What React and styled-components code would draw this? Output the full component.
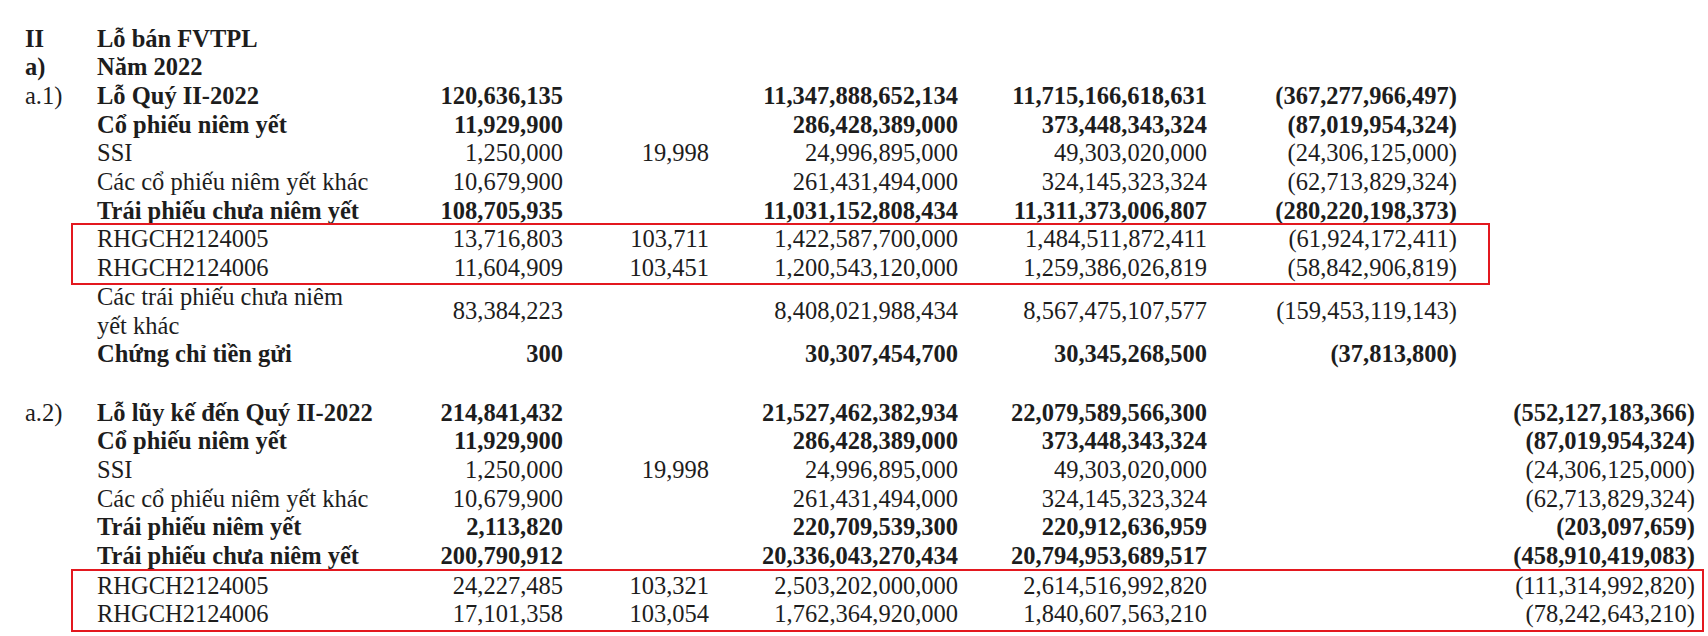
import React from 'react';
import styled, { createGlobalStyle } from 'styled-components';

const GlobalStyle = createGlobalStyle`
  html, body { margin: 0; padding: 0; background: #ffffff; }
  body {
    font-family: "Liberation Serif", "Times New Roman", serif;
    color: #1d1d1d;
  }
`;

const ROW = 28.7;
const COLS = '72px 300px 166px 146px 249px 249px 250px 238px';

const Sheet = styled.div`
  width: 1708px;
  height: 636px;
  box-sizing: border-box;
  padding: 24.65px 0 0 25px;
  overflow: hidden;
  font-size: 24.5px;
  display: flex;
  flex-direction: column;
`;

const Row = styled.div`
  display: grid;
  grid-template-columns: ${COLS};
  align-items: center;
  height: ${(p) => (p.$lines || 1) * ROW}px;
  line-height: ${ROW}px;
  font-weight: ${(p) => (p.$bold ? 700 : 400)};
`;

const Marker = styled.div`
  font-weight: ${(p) => (p.$bold ? 700 : 400)};
  white-space: nowrap;
`;

const Label = styled.div`
  white-space: nowrap;
`;

const Num = styled.div`
  text-align: right;
  white-space: nowrap;
`;

const Spacer = styled.div`
  height: ${(p) => p.$h}px;
  flex: none;
`;

const Highlight = styled.div`
  position: relative;
  &::after {
    content: '';
    position: absolute;
    left: 46px;
    width: ${(p) => p.$width}px;
    top: -${(p) => p.$top}px;
    bottom: -${(p) => p.$bottom}px;
    border: 2px solid #e3181f;
    box-sizing: border-box;
    pointer-events: none;
  }
`;

const sectionA1 = [
  { m: 'a.1)', label: 'Lỗ Quý II-2022', bold: true, c: ['120,636,135', '', '11,347,888,652,134', '11,715,166,618,631', '(367,277,966,497)', ''] },
  { label: 'Cổ phiếu niêm yết', bold: true, c: ['11,929,900', '', '286,428,389,000', '373,448,343,324', '(87,019,954,324)', ''] },
  { label: 'SSI', c: ['1,250,000', '19,998', '24,996,895,000', '49,303,020,000', '(24,306,125,000)', ''] },
  { label: 'Các cổ phiếu niêm yết khác', c: ['10,679,900', '', '261,431,494,000', '324,145,323,324', '(62,713,829,324)', ''] },
  { label: 'Trái phiếu chưa niêm yết', bold: true, c: ['108,705,935', '', '11,031,152,808,434', '11,311,373,006,807', '(280,220,198,373)', ''] },
];

const boxA1 = [
  { label: 'RHGCH2124005', c: ['13,716,803', '103,711', '1,422,587,700,000', '1,484,511,872,411', '(61,924,172,411)', ''] },
  { label: 'RHGCH2124006', c: ['11,604,909', '103,451', '1,200,543,120,000', '1,259,386,026,819', '(58,842,906,819)', ''] },
];

const tailA1 = [
  { label: ['Các trái phiếu chưa niêm', 'yết khác'], lines: 2, c: ['83,384,223', '', '8,408,021,988,434', '8,567,475,107,577', '(159,453,119,143)', ''] },
  { label: 'Chứng chỉ tiền gửi', bold: true, c: ['300', '', '30,307,454,700', '30,345,268,500', '(37,813,800)', ''] },
];

const sectionA2 = [
  { m: 'a.2)', label: 'Lỗ lũy kế đến Quý II-2022', bold: true, c: ['214,841,432', '', '21,527,462,382,934', '22,079,589,566,300', '', '(552,127,183,366)'] },
  { label: 'Cổ phiếu niêm yết', bold: true, c: ['11,929,900', '', '286,428,389,000', '373,448,343,324', '', '(87,019,954,324)'] },
  { label: 'SSI', c: ['1,250,000', '19,998', '24,996,895,000', '49,303,020,000', '', '(24,306,125,000)'] },
  { label: 'Các cổ phiếu niêm yết khác', c: ['10,679,900', '', '261,431,494,000', '324,145,323,324', '', '(62,713,829,324)'] },
  { label: 'Trái phiếu niêm yết', bold: true, c: ['2,113,820', '', '220,709,539,300', '220,912,636,959', '', '(203,097,659)'] },
  { label: 'Trái phiếu chưa niêm yết', bold: true, c: ['200,790,912', '', '20,336,043,270,434', '20,794,953,689,517', '', '(458,910,419,083)'] },
];

const boxA2 = [
  { label: 'RHGCH2124005', c: ['24,227,485', '103,321', '2,503,202,000,000', '2,614,516,992,820', '', '(111,314,992,820)'] },
  { label: 'RHGCH2124006', c: ['17,101,358', '103,054', '1,762,364,920,000', '1,840,607,563,210', '', '(78,242,643,210)'] },
];

function DataRow({ r }) {
  return (
    <Row $bold={r.bold} $lines={r.lines}>
      <Marker>{r.m || ''}</Marker>
      <Label>
        {Array.isArray(r.label)
          ? r.label.map((t, i) => (
              <React.Fragment key={i}>
                {i > 0 && <br />}
                {t}
              </React.Fragment>
            ))
          : r.label}
      </Label>
      {r.c.map((v, i) => (
        <Num key={i}>{v}</Num>
      ))}
    </Row>
  );
}

export default function App() {
  return (
    <>
      <GlobalStyle />
      <Sheet>
        <Row $bold>
          <Marker $bold>II</Marker>
          <Label>Lỗ bán FVTPL</Label>
        </Row>
        <Row $bold>
          <Marker $bold>a)</Marker>
          <Label>Năm 2022</Label>
        </Row>
        {sectionA1.map((r, i) => (
          <DataRow key={'a1' + i} r={r} />
        ))}
        <Highlight $width={1419} $top={2} $bottom={2}>
          {boxA1.map((r, i) => (
            <DataRow key={'b1' + i} r={r} />
          ))}
        </Highlight>
        {tailA1.map((r, i) => (
          <DataRow key={'t1' + i} r={r} />
        ))}
        <Spacer $h={ROW + 1} />
        {sectionA2.map((r, i) => (
          <DataRow key={'a2' + i} r={r} />
        ))}
        <Spacer $h={1} />
        <Highlight $width={1633} $top={3} $bottom={3}>
          {boxA2.map((r, i) => (
            <DataRow key={'b2' + i} r={r} />
          ))}
        </Highlight>
      </Sheet>
    </>
  );
}
